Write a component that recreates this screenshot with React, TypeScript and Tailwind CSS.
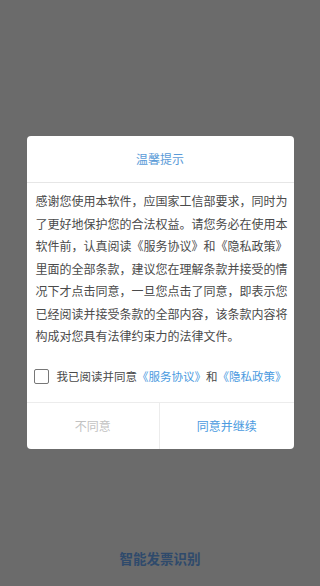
import React, { useState } from 'react';

const font = { fontFamily: '"Noto Sans CJK SC", "Noto Sans", sans-serif' };

export default function App() {
  const [checked, setChecked] = useState(false);

  return (
    <div
      className="w-[320px] h-[586px] bg-[#6b6b6b] flex flex-col items-center pt-[136px] overflow-hidden"
      style={font}
    >
      {/* Dialog */}
      <div className="w-[267px] bg-white rounded-[4px] flex flex-col">
        <div className="h-[47px] flex items-center justify-center border-b border-[#e6e6e6]">
          <span className="text-[12px] text-[#5a9bd8]">温馨提示</span>
        </div>

        <div className="pl-[9px] pr-[5px] pt-[7px]">
          <p className="text-[12px] leading-[22.5px] text-[#4a4a4a]">
            感谢您使用本软件，应国家工信部要求，同时为了更好地保护您的合法权益。请您务必在使用本软件前，认真阅读《服务协议》和《隐私政策》里面的全部条款，建议您在理解条款并接受的情况下才点击同意，一旦您点击了同意，即表示您已经阅读并接受条款的全部内容，该条款内容将构成对您具有法律约束力的法律文件。
          </p>
        </div>

        <div className="h-[54px] pt-[4px] flex items-center pl-[7px]">
          <button
            onClick={() => setChecked(!checked)}
            className="w-[15px] h-[15px] border-[1.5px] border-[#777] rounded-[2px] flex items-center justify-center shrink-0"
          >
            {checked && (
              <svg viewBox="0 0 12 12" className="w-[11px] h-[11px]">
                <path d="M2 6l3 3 5-6" fill="none" stroke="#5a9bd8" strokeWidth="1.8" />
              </svg>
            )}
          </button>
          <span className="ml-[8px] text-[11.5px] text-[#4a4a4a] whitespace-nowrap">
            我已阅读并同意<span className="text-[#4a9ae0]">《服务协议》</span>和<span className="text-[#4a9ae0]">《隐私政策》</span>
          </span>
        </div>

        <div className="h-[47px] grid grid-cols-2 border-t border-[#ececec]">
          <button className="flex items-center justify-center text-[12px] text-[#c2c2c2] border-r border-[#ececec]">
            不同意
          </button>
          <button className="flex items-center justify-center text-[12px] text-[#4a9ae0]">
            同意并继续
          </button>
        </div>
      </div>

      {/* Page behind overlay */}
      <div className="mt-auto pb-[17px]">
        <span className="text-[13.5px] font-bold text-[#2f4a6b]">智能发票识别</span>
      </div>
    </div>
  );
}
